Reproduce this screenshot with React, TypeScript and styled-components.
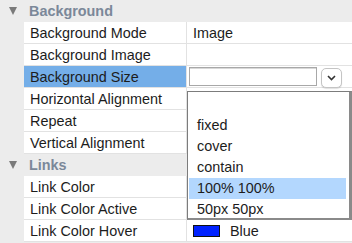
import React from "react";
import styled, { createGlobalStyle } from "styled-components";

const GlobalStyle = createGlobalStyle`
  html, body {
    margin: 0;
    padding: 0;
    background: #ececec;
  }
  body {
    font-family: "Liberation Sans", Arial, sans-serif;
    font-size: 14.4px;
    color: #1c1c1c;
  }
`;

type RowT = { label: string; value?: React.ReactNode; selected?: boolean };

const backgroundRows: RowT[] = [
  { label: "Background Mode", value: "Image" },
  { label: "Background Image" },
  { label: "Background Size", selected: true },
  { label: "Horizontal Alignment" },
  { label: "Repeat" },
  { label: "Vertical Alignment" },
];

const linkRows: RowT[] = [
  { label: "Link Color" },
  { label: "Link Color Active" },
  { label: "Link Color Hover", value: "blue" },
];

const sizeOptions = ["", "fixed", "cover", "contain", "100% 100%", "50px 50px"];

const App = () => {
  return (
    <>
      <GlobalStyle />
      <Panel>
        <Section title="Background" rows={backgroundRows} />
        <Section title="Links" rows={linkRows} />
        <Dropdown>
          {sizeOptions.map((o, i) => (
            <Option key={i} $active={o === "100% 100%"}>
              {o}
            </Option>
          ))}
        </Dropdown>
      </Panel>
    </>
  );
};

const Section = ({ title, rows }: { title: string; rows: RowT[] }) => (
  <>
    <Header>
      <Triangle />
      <HeaderTitle>{title}</HeaderTitle>
    </Header>
    {rows.map((r) => (
      <Row key={r.label}>
        <Label $selected={r.selected}>{r.label}</Label>
        <Value>
          {r.selected ? (
            <>
              <TextInput />
              <ChevronButton>
                <svg width="9" height="6" viewBox="0 0 9 6">
                  <path
                    d="M1 1 L4.5 4.5 L8 1"
                    fill="none"
                    stroke="#333"
                    strokeWidth="1.6"
                  />
                </svg>
              </ChevronButton>
            </>
          ) : r.value === "blue" ? (
            <>
              <Swatch />
              <SwatchText>Blue</SwatchText>
            </>
          ) : (
            r.value
          )}
        </Value>
      </Row>
    ))}
  </>
);

const Panel = styled.div`
  position: relative;
  width: 352px;
  height: 243px;
  overflow: hidden;
  background: #ececec;
`;

const Header = styled.div`
  display: flex;
  align-items: center;
  height: 22px;
  background: #ececec;
`;

const Triangle = styled.div`
  width: 0;
  height: 0;
  margin-left: 9px;
  margin-right: 12px;
  border-left: 4.5px solid transparent;
  border-right: 4.5px solid transparent;
  border-top: 8px solid #7a7a7a;
`;

const HeaderTitle = styled.span`
  font-weight: bold;
  color: #7b8899;
`;

const Row = styled.div`
  display: flex;
  height: 21px;
  margin-left: 24px;
  border-bottom: 1px solid #e2e2e2;
  background: #ffffff;
`;

const Label = styled.div<{ $selected?: boolean }>`
  width: 163px;
  padding-left: 6px;
  box-sizing: border-box;
  display: flex;
  align-items: center;
  border-right: 1px solid #e2e2e2;
  background: ${(p) => (p.$selected ? "#74aee8" : "#ffffff")};
  white-space: nowrap;
`;

const Value = styled.div`
  flex: 1;
  display: flex;
  align-items: center;
  padding-left: 6px;
  position: relative;
`;

const TextInput = styled.div`
  position: absolute;
  left: 2px;
  top: 1px;
  width: 128px;
  height: 19px;
  box-sizing: border-box;
  border: 1px solid #a8a8a8;
  box-shadow: inset 0 1px 0 #d8d8d8;
  background: #fff;
`;

const ChevronButton = styled.div`
  position: absolute;
  left: 134px;
  top: 2px;
  width: 21px;
  height: 20px;
  box-sizing: border-box;
  border: 1px solid #c4c4c4;
  border-radius: 5px;
  background: #fff;
  display: flex;
  align-items: center;
  justify-content: center;
  box-shadow: 0 1px 1px rgba(0, 0, 0, 0.12);
  z-index: 3;
`;

const Swatch = styled.div`
  width: 25px;
  height: 10px;
  border: 1px solid #111;
  background: #0022ff;
  margin-right: 10px;
`;

const SwatchText = styled.span`
  color: #1c1c1c;
`;

const Dropdown = styled.div`
  position: absolute;
  left: 187px;
  top: 91px;
  width: 165px;
  height: 129px;
  box-sizing: border-box;
  border: 1px solid #7c7c7c;
  border-right: 3px solid #8a8a8a;
  border-bottom: 2px solid #8a8a8a;
  background: #fff;
  padding: 2px 3px 0 1px;
  z-index: 2;
`;

const Option = styled.div<{ $active?: boolean }>`
  height: 21px;
  line-height: 21px;
  padding-left: 8px;
  background: ${(p) => (p.$active ? "#b3d7fe" : "transparent")};
  color: #1c1c1c;
`;

export default App;
